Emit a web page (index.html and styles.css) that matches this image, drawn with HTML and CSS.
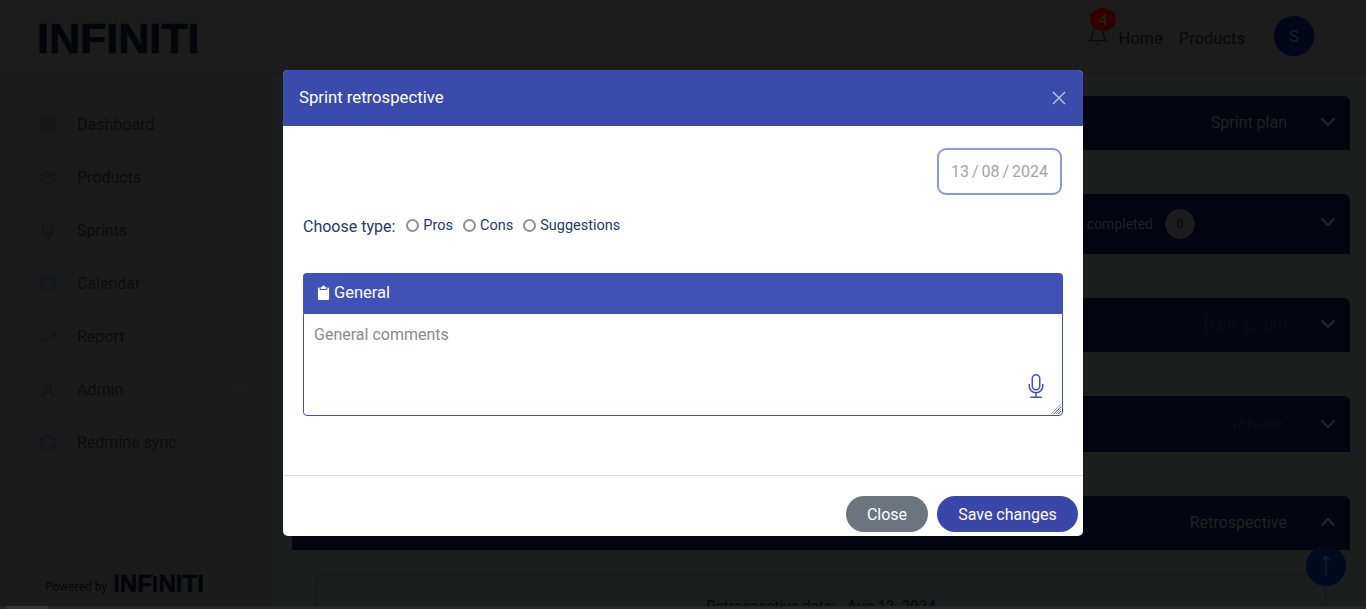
FILE: index.html
```html
<!DOCTYPE html>
<html lang="en">
<head>
<meta charset="utf-8">
<title>Sprint retrospective</title>
<link rel="stylesheet" href="styles.css">
</head>
<body>
<div class="app">
  <header class="topbar">
    <div class="logo logo-large">INF<span class="logo-i">I</span>NITI</div>
    <div class="topbar-right">
      <div class="bell-wrap">
        <svg class="bell" viewBox="0 0 24 24" fill="none" stroke="currentColor" stroke-width="1.5" stroke-linecap="round" stroke-linejoin="round"><path d="M18 9a6 6 0 0 0-12 0c0 6-3 8-3 8h18s-3-2-3-8"/><path d="M11 21a1.5 1.5 0 0 0 2 0"/></svg>
        <span class="badge">4</span>
      </div>
      <a class="toplink">Home</a>
      <a class="toplink">Products</a>
      <span class="avatar">S</span>
    </div>
  </header>
  <div class="layout">
    <aside class="sidebar">
      <nav class="nav">
        <div class="nav-item"><svg class="nav-icon" viewBox="0 0 20 20"><rect x="3.5" y="3.5" width="5.5" height="5.5"/><rect x="11" y="3.500" width="5.500" height="5.500"/><rect x="3.5" y="11" width="5.500" height="5.500"/><rect x="11" y="11" width="5.500" height="5.500"/></svg><span>Dashboard</span></div>
        <div class="nav-item"><svg class="nav-icon" viewBox="0 0 20 20"><path d="M10 3l6.500 3.500v7L10 17l-6.500-3.500v-7zM3.500 6.500L10 10l6.500-3.500M10 10v7M7 4.700l6.500 3.500"/></svg><span>Products</span></div>
        <div class="nav-item"><svg class="nav-icon" viewBox="0 0 20 20"><path d="M5 3h10v5H5zM5 8l10 5H10M5 8v5h5v5l5-5"/></svg><span>Sprints</span></div>
        <div class="nav-item"><svg class="nav-icon" viewBox="0 0 20 20"><rect x="3.500" y="4" width="13" height="13" rx="1.500"/><path d="M3.500 8h13M7 2.500v3M13 2.500v3"/></svg><span>Calendar</span></div>
        <div class="nav-item"><svg class="nav-icon" viewBox="0 0 20 20"><path d="M1 16l5.500-5.500 3 2.500L18 5M13 5h5v5"/></svg><span>Report</span><svg class="nav-caret" viewBox="0 0 14 8"><path d="M1 1l6 6 6-6"/></svg></div>
        <div class="nav-item"><svg class="nav-icon" viewBox="0 0 20 20"><circle cx="10" cy="6.500" r="3"/><path d="M4.500 17v-1.500a3 3 0 0 1 3-3h5a3 3 0 0 1 3 3V17"/></svg><span>Admin</span><svg class="nav-caret" viewBox="0 0 14 8"><path d="M1 1l6 6 6-6"/></svg></div>
        <div class="nav-item"><svg class="nav-icon" viewBox="0 0 20 20"><path d="M17 9a7 7 0 0 0-12.500-3L2 8M2 3v5h5M3 11a7 7 0 0 0 12.500 3L18 12M18 17v-5h-5"/></svg><span>Redmine sync</span></div>
      </nav>
      <div class="powered"><span class="powered-text">Powered by</span><span class="logo logo-small">INF<span class="logo-i">I</span>NITI</span></div>
    </aside>
    <main class="main">
      <section class="bar"><span class="bar-title">Sprint plan</span><svg class="chev" viewBox="0 0 16 10"><path d="M2 2l6 6 6-6"/></svg></section>
      <section class="bar bar-count"><span class="bar-title">Tasks completed</span><span class="count">0</span><svg class="chev" viewBox="0 0 16 10"><path d="M2 2l6 6 6-6"/></svg></section>
      <section class="bar"><span class="bar-title bar-dim">Daily scrum</span><svg class="chev" viewBox="0 0 16 10"><path d="M2 2l6 6 6-6"/></svg></section>
      <section class="bar bar-review"><span class="bar-title bar-dim">Review</span><svg class="chev" viewBox="0 0 16 10"><path d="M2 2l6 6 6-6"/></svg></section>
      <section class="bar bar-open"><span class="bar-title">Retrospective</span><svg class="chev" viewBox="0 0 16 10"><path d="M2 8l6-6 6 6"/></svg></section>
      <section class="retro-card"><div class="retro-date">Retrospective date: &nbsp; Aug 12, 2024</div></section>
    </main>
  </div>
</div>

<button class="to-top" type="button" aria-label="Back to top"><svg viewBox="0 0 16 30"><path d="M8 28V3M4 8l4-5 4 5"/></svg></button>
<div class="scroll-track"><span class="scroll-thumb"></span></div>

<div class="modal" role="dialog">
  <div class="modal-head">
    <h5 class="modal-title">Sprint retrospective</h5>
    <svg class="modal-x" viewBox="0 0 14 14"><path d="M1 1l12 12M13 1L1 13"/></svg>
  </div>
  <div class="modal-body">
    <div class="date-row"><div class="date-field">13 / 08 / 2024</div></div>
    <div class="type-row">
      <span class="type-label">Choose type:</span>
      <label class="radio"><input type="radio" name="t"><span>Pros</span></label>
      <label class="radio"><input type="radio" name="t"><span>Cons</span></label>
      <label class="radio"><input type="radio" name="t"><span>Suggestions</span></label>
    </div>
    <div class="panel">
      <div class="panel-head">
        <svg class="clip" viewBox="0 0 14 16"><path d="M4 2h1.500a1.500 1.500 0 0 1 3 0H10v2.200H4z"/><path d="M2.800 2.600v1.600a1 1 0 0 0 1 1h6.400a1 1 0 0 0 1-1V2.600h.8a1 1 0 0 1 1 1V15a1 1 0 0 1-1 1H2a1 1 0 0 1-1-1V3.600a1 1 0 0 1 1-1z"/></svg>
        <span>General</span>
      </div>
      <div class="panel-field">
        <textarea class="comments" placeholder="General comments"></textarea>
        <svg class="mic" viewBox="0 0 16 16"><path d="M3.500 6.500A.5.5 0 0 1 4 7v1a4 4 0 0 0 8 0V7a.5.5 0 0 1 1 0v1a5 5 0 0 1-4.500 4.975V15h3a.5.5 0 0 1 0 1h-7a.5.5 0 0 1 0-1h3v-2.025A5 5 0 0 1 3 8V7a.5.5 0 0 1 .5-.5z"/><path d="M10 8a2 2 0 1 1-4 0V3a2 2 0 1 1 4 0v5zM8 0a3 3 0 0 0-3 3v5a3 3 0 0 0 6 0V3a3 3 0 0 0-3-3z"/></svg>
        <svg class="grip" viewBox="0 0 12 12"><path d="M11 1L1 11M11 3.500L3.500 11M11 6L6 11M11 8.500L8.500 11"/></svg>
      </div>
    </div>
  </div>
  <div class="modal-foot">
    <button class="btn btn-close" type="button">Close</button>
    <button class="btn btn-save" type="button">Save changes</button>
  </div>
</div>
</body>
</html>
```
FILE: styles.css
```css
* { box-sizing: border-box; }
html, body { margin: 0; height: 609px; overflow: hidden; }
body { background: #1c1c1c; font-family: Roboto, "Liberation Sans", sans-serif; font-size: 16px; color: #0c0c0c; }

.app { display: flex; flex-direction: column; height: 609px; }
.topbar { height: 77px; flex: none; display: flex; align-items: center; justify-content: space-between; padding: 0 52px 0 37px; border-bottom: 1px solid #191919; }
.logo { font-family: "Liberation Sans", Arial, sans-serif; font-weight: 700; color: #03050a; line-height: 1; position: relative; }
.logo-large { font-size: 43px; margin-top: 1px; -webkit-text-stroke: 0.7px #03050a; }
.logo-small { font-size: 24px; -webkit-text-stroke: 0.4px #03050a; }
.logo-i { position: relative; }
.logo-i::before { content: ""; position: absolute; left: 40%; top: 14%; width: 0; height: 0; border-top: 3px solid #4a1d06; border-left: 3px solid transparent; }

.topbar-right { display: flex; align-items: center; }
.bell-wrap { position: relative; width: 30px; height: 20px; color: #080b16; }
.bell { position: absolute; left: -1px; top: -3px; width: 22px; height: 22px; }
.badge { position: absolute; left: 2px; top: -20px; width: 26px; height: 23px; border-radius: 50%; background: #300000; color: #242424; font-size: 14px; display: flex; align-items: center; justify-content: center; }
.toplink { color: #090909; margin-right: 16px; line-height: 20px; margin-top: 1px; font-size: 16.5px; }
.avatar { width: 40px; height: 40px; border-radius: 50%; background: #030518; color: #1c1f30; display: flex; align-items: center; justify-content: center; margin-left: 13px; margin-top: -4px; }

.layout { flex: 1; display: flex; min-height: 0; }
.sidebar { width: 272px; flex: none; display: flex; flex-direction: column; padding: 21px 0 13px; background: #1b1b1b; }
.nav { display: flex; flex-direction: column; }
.nav-item { height: 53px; display: flex; align-items: center; padding-left: 38px; color: #0c0c0c; }
.nav-item > span { margin-left: 19px; flex: 1; }
.nav-icon { width: 20px; height: 20px; fill: none; stroke: #12141c; stroke-width: 1.200; flex: none; }
.nav-caret { width: 14px; height: 8px; fill: none; stroke: #222222; stroke-width: 1.100; margin-right: 25px; flex: none; }
.powered { margin-top: auto; padding-left: 45px; display: flex; align-items: flex-start; font-size: 12px; color: #060606; gap: 6px; }
.powered-text { margin-top: 8px; }

.main { flex: 1; min-width: 0; padding: 19px 16px 0 20px; display: flex; flex-direction: column; gap: 44px; background: #1c1e1d; overflow: hidden; }
.bar { height: 54px; flex: none; background: #030611; border-radius: 6px 6px 0 0; display: flex; align-items: center; justify-content: flex-end; padding: 0 14px 2px 0; color: #212121; }
.bar-count { height: 60px; padding-bottom: 0; }
.bar-count .chev { margin-bottom: 4px; }
.bar-review { height: 56px; padding-bottom: 0; }
.bar-title { margin-right: 33px; }
.bar-dim { color: #0a0c12; }
.bar-review .bar-title { margin-right: 37px; }
.bar-count .bar-title { font-size: 14px; margin-right: 0; }
.count { width: 30px; height: 30px; border-radius: 50%; background: #1c1c1c; color: #080b1a; font-size: 12px; font-weight: 500; display: flex; align-items: center; justify-content: center; margin: 0 125px 0 12px; }
.chev { width: 16px; height: 10px; fill: none; stroke: #262626; stroke-width: 2.200; stroke-linecap: round; stroke-linejoin: round; flex: none; }
.retro-card { margin: -20px 24px 0; height: 200px; flex: none; border: 1px solid #161616; border-radius: 8px; display: flex; justify-content: center; padding: 22px 0 0 0; }
.retro-date { color: #080a14; font-weight: 500; font-size: 15px; }

.to-top { position: absolute; left: 1306px; top: 546px; width: 40px; height: 40px; border-radius: 50%; border: 0; padding: 0; background: #010a1e; display: flex; align-items: center; justify-content: center; }
.to-top svg { width: 14px; height: 24px; fill: none; stroke: #16233a; stroke-width: 1.500; }
.scroll-track { position: absolute; left: 0; top: 606px; width: 1366px; height: 3px; background: #262626; }
.scroll-thumb { display: block; width: 42px; height: 3px; margin-left: 6px; background: #343434; }

.modal { position: absolute; left: 283px; top: 70px; width: 800px; height: 466px; background: #fff; border-radius: 5px; display: flex; flex-direction: column; overflow: hidden; }
.modal-head { height: 56px; flex: none; background: #3b4bab; display: flex; align-items: center; justify-content: space-between; padding: 0 17px 2px 16px; color: #fff; }
.modal-title { margin: 0; font-size: 16.700px; font-weight: 400; }
.modal-x { width: 14px; height: 14px; margin-top: 2px; fill: none; stroke: #b9bfe2; stroke-width: 1.500; }
.modal-body { flex: 1; padding: 22px 20px 0; display: flex; flex-direction: column; }
.date-row { display: flex; justify-content: flex-end; }
.date-field { width: 125px; height: 47px; margin-right: 1px; border: 2px solid #8c98d8; border-radius: 9px; display: flex; align-items: center; padding-left: 12px; color: #a3a3a3; word-spacing: -1px; }
.type-row { display: flex; align-items: center; margin-top: 18px; height: 24px; color: #27376b; }
.type-label { margin-right: 8px; margin-top: 2px; }
.radio { display: flex; align-items: center; font-size: 14.500px; margin-right: 7px; }
.radio input { appearance: none; margin: 0 4px 0 3px; width: 13px; height: 13px; border: 2px solid #8e8e9c; border-radius: 50%; background: #fff; }
.panel { margin-top: 36px; }
.panel-head { height: 40px; background: #4052b5; border-radius: 4px 4px 0 0; color: #fff; display: flex; align-items: center; padding: 0 0 2px 14px; font-size: 16.500px; }
.clip { width: 13px; height: 15px; fill: #fff; margin-right: 4px; }
.panel-field { position: relative; height: 103px; }
.comments { display: block; width: 100%; height: 103px; border: 1px solid #3f51b5; border-radius: 0 0 4px 4px; padding: 11px 10px; font: 16px Roboto, sans-serif; color: #333; outline: none; }
.comments::placeholder { color: #8a8a8a; }
.mic { position: absolute; right: 15px; top: 61px; width: 24px; height: 24px; fill: #3f51b5; }
.grip { position: absolute; right: 1px; bottom: 1px; width: 12px; height: 12px; fill: none; stroke: #8a8a8a; stroke-width: 0.800; pointer-events: none; }
.modal-foot { height: 61px; flex: none; border-top: 1px solid #dedede; display: flex; justify-content: flex-end; align-items: flex-start; padding: 20px 5px 0 0; gap: 9px; }
.btn { height: 36px; border: 0; border-radius: 18px; color: #fff; font: 16px Roboto, sans-serif; padding: 0; }
.btn-close { width: 82px; background: #6c757d; }
.btn-save { width: 141px; background: #3b47a8; }
```
